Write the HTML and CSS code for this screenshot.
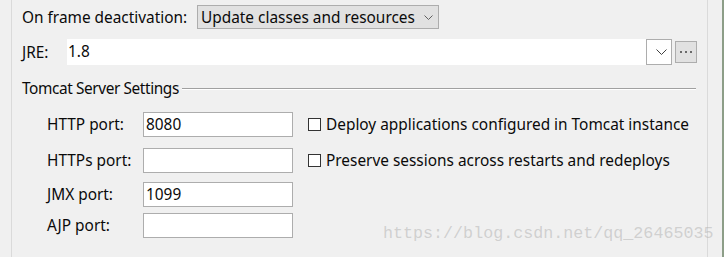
FILE: index.html
```html
<!DOCTYPE html>
<html lang="en">
<head>
  <meta charset="UTF-8" />
  <title>Tomcat Server Settings</title>
  <link rel="stylesheet" href="styles.css">
</head>
<body>
  <div class="window">
    <div class="grip"></div>
    <div class="frame">
      <div class="row top-row">
        <span class="label">On frame deactivation:</span>
        <div class="combo">
          <span>Update classes and resources</span>
          <svg class="chevron" width="9" height="5" viewBox="0 0 9 5"><path d="M0.5 0.5 L4.5 4.5 L8.5 0.5" fill="none" stroke="#606060" stroke-width="1"/></svg>
        </div>
      </div>

      <div class="row jre-row">
        <span class="label jre-label">JRE:</span>
        <div class="jre-field">
          <span class="jre-value">1.8</span>
          <div class="jre-drop">
            <svg width="11" height="6" viewBox="0 0 11 6"><path d="M0.5 0.5 L5.5 5.5 L10.5 0.5" fill="none" stroke="#404040" stroke-width="1"/></svg>
          </div>
        </div>
        <div class="more-button">
          <svg width="12" height="3" viewBox="0 0 12 3"><rect x="0" y="0" width="2" height="2" fill="#6a6a6a"/><rect x="5" y="0" width="2" height="2" fill="#6a6a6a"/><rect x="10" y="0" width="2" height="2" fill="#6a6a6a"/></svg>
        </div>
      </div>

      <div class="group-title">
        <span class="group-name">Tomcat Server Settings</span>
        <div class="rule"></div>
      </div>

      <div class="ports">
        <div class="port-row">
          <span class="port-label">HTTP port:</span>
          <div class="port-field">8080</div>
          <label class="check"><span class="box"></span>Deploy applications configured in Tomcat instance</label>
        </div>
        <div class="port-row second">
          <span class="port-label">HTTPs port:</span>
          <div class="port-field"></div>
          <label class="check"><span class="box"></span>Preserve sessions across restarts and redeploys</label>
        </div>
        <div class="port-row third">
          <span class="port-label">JMX port:</span>
          <div class="port-field">1099</div>
        </div>
        <div class="port-row fourth">
          <span class="port-label">AJP port:</span>
          <div class="port-field"></div>
        </div>
      </div>
    </div>
    <div class="edge"></div>
  </div>
  <div class="watermark">https://blog.csdn.net/qq_26465035</div>
</body>
</html>
```

FILE: styles.css
```css
html, body {
  margin: 0;
  height: 257px;
  overflow: hidden;
}
body {
  background: #f0f0f0;
  font-family: 'Noto Sans', 'Open Sans', sans-serif;
  font-size: 15.4px;
  color: #0a0a0a;
  position: relative;
}
.window {
  display: flex;
  height: 257px;
}
.grip {
  width: 11px;
  background: #f0f0f0;
}
.frame {
  width: 685px;
  border-left: 1px solid #dadada;
  border-right: 1px solid #dadada;
  padding-left: 10px;
}
.edge {
  margin-left: 14px;
  width: 2px;
  background: #8d9e88;
}
.row {
  display: flex;
  align-items: center;
}
.top-row {
  margin-top: 5px;
  height: 24px;
}
.top-row .label {
  width: 175px;
}
.combo {
  width: 237px;
  height: 22px;
  background: #e1e1e1;
  border: 1px solid #adadad;
  display: flex;
  align-items: center;
  justify-content: space-between;
  padding-left: 3px;
}
.combo .chevron {
  margin-right: 5px;
}
.jre-row {
  margin-top: 10px;
  height: 26px;
}
.jre-label {
  width: 45px;
}
.jre-field {
  display: flex;
  width: 605px;
  height: 26px;
  background: #fff;
}
.jre-value {
  flex: 1;
  padding-left: 1px;
  line-height: 26px;
}
.jre-drop {
  width: 26px;
  height: 26px;
  border: 1px solid #adadad;
  display: flex;
  align-items: center;
  justify-content: center;
  padding-left: 4px;
  box-sizing: border-box;
}
.more-button {
  margin-left: 3px;
  width: 20px;
  height: 20px;
  border: 1px solid #adadad;
  background: #e1e1e1;
  display: flex;
  align-items: center;
  justify-content: center;
}
.group-title {
  display: flex;
  align-items: center;
  margin-top: 12px;
  height: 22px;
}
.group-name {
  width: 160px;
  letter-spacing: -0.4px;
  white-space: nowrap;
}
.group-title .rule {
  flex: 1;
  margin-right: 11px;
  height: 1px;
  background: #a0a0a0;
  border-bottom: 1px solid #fff;
  margin-top: 1px;
}
.ports {
  margin-top: 13px;
  padding-left: 25px;
}
.port-row {
  display: flex;
  align-items: center;
  height: 25px;
}
.port-row.second { margin-top: 11px; }
.port-row.third { margin-top: 9px; }
.port-row.fourth { margin-top: 6px; }
.port-label {
  width: 96px;
}
.port-field {
  width: 146px;
  height: 23px;
  border: 1px solid #adadad;
  background: #fff;
  line-height: 23px;
  padding-left: 2px;
}
.check {
  display: flex;
  align-items: center;
  margin-left: 15px;
}
.box {
  width: 11px;
  height: 11px;
  border: 1px solid #333;
  background: #fff;
  margin-right: 5px;
}
.watermark {
  position: absolute;
  left: 383px;
  top: 224px;
  font-family: 'Liberation Mono', monospace;
  font-size: 16.7px;
  color: rgba(180, 180, 180, 0.55);
  white-space: nowrap;
}
```
